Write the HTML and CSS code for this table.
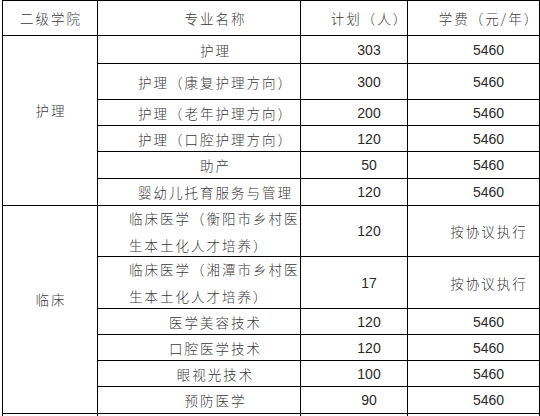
FILE: index.html
```html
<!DOCTYPE html>
<html lang="zh-CN">
<head>
<meta charset="utf-8">
<title>专业计划与学费</title>
<link rel="stylesheet" href="styles.css">
</head>
<body>
<div class="sheet">
  <div class="grid">
    <div class="cell dept head">二级学院</div>
    <div class="cell name">专业名称</div>
    <div class="cell num cn">计划（人）</div>
    <div class="cell fee cn">学费（元/年）</div>

    <div class="cell dept group">护理</div>
    <div class="cell name">护理</div>
    <div class="cell num">303</div>
    <div class="cell fee">5460</div>
    <div class="cell name">护理（康复护理方向）</div>
    <div class="cell num">300</div>
    <div class="cell fee">5460</div>
    <div class="cell name">护理（老年护理方向）</div>
    <div class="cell num">200</div>
    <div class="cell fee">5460</div>
    <div class="cell name">护理（口腔护理方向）</div>
    <div class="cell num">120</div>
    <div class="cell fee">5460</div>
    <div class="cell name">助产</div>
    <div class="cell num">50</div>
    <div class="cell fee">5460</div>
    <div class="cell name">婴幼儿托育服务与管理</div>
    <div class="cell num">120</div>
    <div class="cell fee">5460</div>

    <div class="cell dept group">临床</div>
    <div class="cell name wrap"><span>临床医学（衡阳市乡村医<br>生本土化人才培养）</span></div>
    <div class="cell num">120</div>
    <div class="cell fee cn">按协议执行</div>
    <div class="cell name wrap"><span>临床医学（湘潭市乡村医<br>生本土化人才培养）</span></div>
    <div class="cell num">17</div>
    <div class="cell fee cn">按协议执行</div>
    <div class="cell name">医学美容技术</div>
    <div class="cell num">120</div>
    <div class="cell fee">5460</div>
    <div class="cell name">口腔医学技术</div>
    <div class="cell num">120</div>
    <div class="cell fee">5460</div>
    <div class="cell name">眼视光技术</div>
    <div class="cell num">100</div>
    <div class="cell fee">5460</div>
    <div class="cell name">预防医学</div>
    <div class="cell num">90</div>
    <div class="cell fee">5460</div>

    <div class="cell dept"></div>
    <div class="cell name"></div>
    <div class="cell num"></div>
    <div class="cell fee"></div>
  </div>
</div>
</body>
</html>
```

FILE: styles.css
```css
html, body {
  margin: 0;
  padding: 0;
  background: #fff;
  overflow: hidden;
}

body {
  width: 540px;
  height: 416px;
  font-family: "Liberation Sans", "Noto Sans CJK SC", sans-serif;
  color: #2a2a2a;
}

.sheet {
  padding-left: 2px;
}

.grid {
  display: grid;
  grid-template-columns: 94px 202px 106px 131px;
  grid-template-rows: 34px 27px 35px 25px 25px 26px 26px 50px 51px 25px 25px 25px 26px 2px;
  gap: 1px;
  padding: 1px 1px 0 1px;
  width: 536px;
  background: #000;
}

.cell {
  background: #fff;
  display: flex;
  align-items: center;
  justify-content: center;
  white-space: nowrap;
  font-size: 14px;
}

.dept,
.name,
.cn {
  font-family: "Noto Sans CJK SC", sans-serif;
  font-size: 13.5px;
  font-weight: 300;
  letter-spacing: 2px;
  color: #3a3a3a;
}

.dept {
  padding-left: 2px;
}

.group {
  grid-row: span 6;
  padding-bottom: 22px;
}

.name {
  padding-left: 33px;
}

.num,
.fee {
  padding-left: 30px;
}

.num.cn,
.fee.cn {
  padding-left: 31px;
}

.wrap {
  justify-content: flex-start;
  padding-left: 31px;
}

.wrap span {
  line-height: 27px;
  display: block;
  padding-top: 1px;
}
```
